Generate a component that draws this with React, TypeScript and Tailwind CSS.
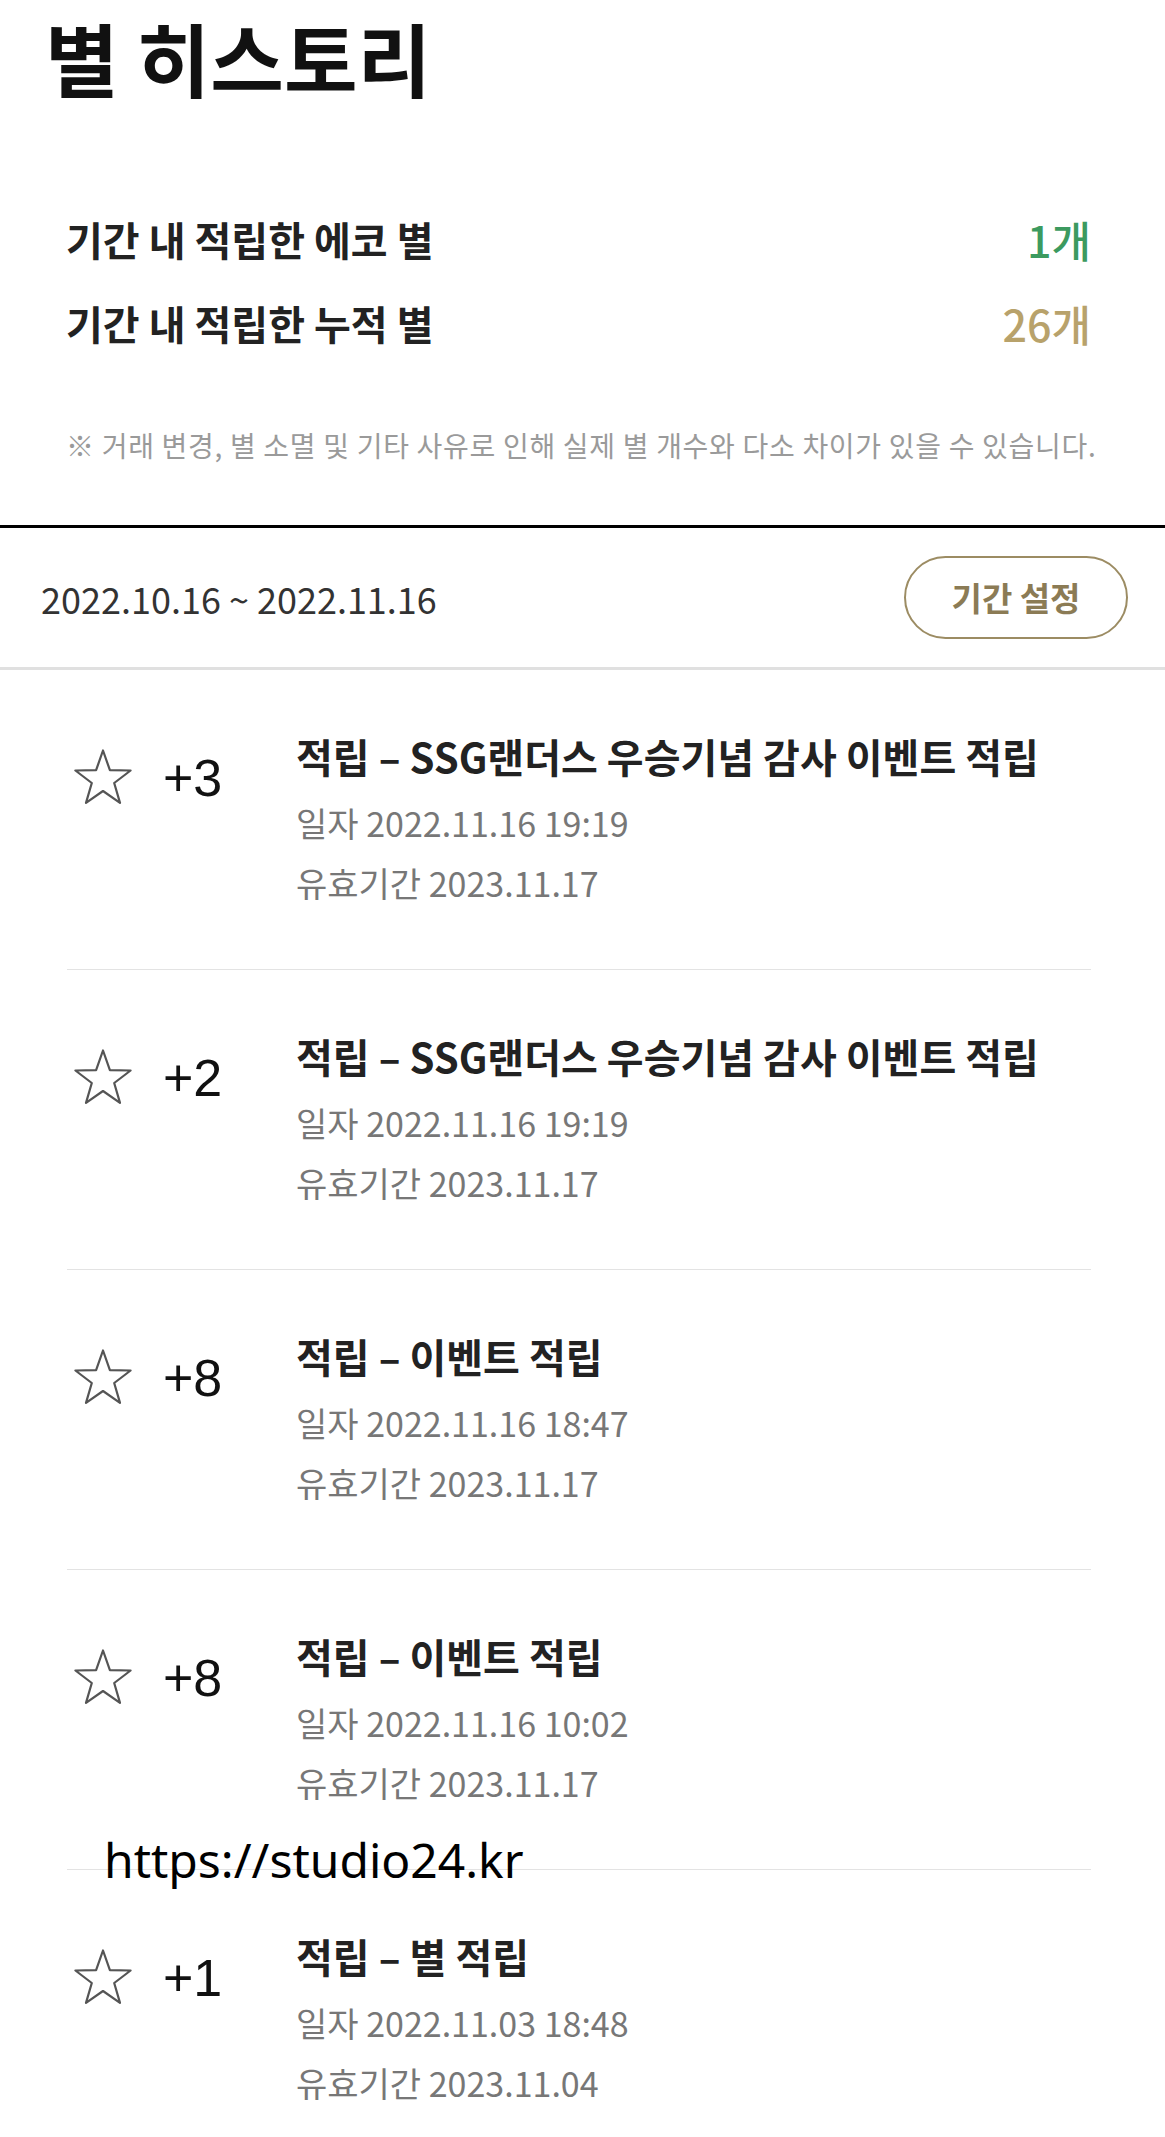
import React from "react";

const KR = { fontFamily: '"Noto Sans CJK KR", "Noto Sans", sans-serif' };

type Item = { amount: string; title: string; date: string; valid: string };

const items: Item[] = [
  { amount: "+3", title: "적립 – SSG랜더스 우승기념 감사 이벤트 적립", date: "일자 2022.11.16 19:19", valid: "유효기간 2023.11.17" },
  { amount: "+2", title: "적립 – SSG랜더스 우승기념 감사 이벤트 적립", date: "일자 2022.11.16 19:19", valid: "유효기간 2023.11.17" },
  { amount: "+8", title: "적립 – 이벤트 적립", date: "일자 2022.11.16 18:47", valid: "유효기간 2023.11.17" },
  { amount: "+8", title: "적립 – 이벤트 적립", date: "일자 2022.11.16 10:02", valid: "유효기간 2023.11.17" },
  { amount: "+1", title: "적립 – 별 적립", date: "일자 2022.11.03 18:48", valid: "유효기간 2023.11.04" },
];

function Star() {
  return (
    <svg width="60" height="58" viewBox="0 0 60 58" fill="none">
      <polygon
        points="30,1.5 36.9,21.2 57.6,21.5 41.2,34 47,53.9 30,42 13,53.9 18.8,34 2.4,21.5 23.1,21.2"
        stroke="#555"
        strokeWidth="2.2"
        strokeLinejoin="round"
      />
    </svg>
  );
}

export default function App() {
  return (
    <div className="relative w-[1165px] bg-white overflow-hidden" style={KR}>
      {/* Header */}
      <section className="pb-[60px] border-b-[3px] border-black">
        <h1 className="pl-[45px] text-[80px] leading-[112px] font-bold text-[#111]">별 히스토리</h1>
        <div className="mt-[85px] pl-[66px] pr-[74px]">
          <div className="flex items-center justify-between h-[84px]">
            <span className="text-[40px] leading-[84px] font-semibold text-[#222]">기간 내 적립한 에코 별</span>
            <span className="text-[43px] leading-[84px] font-medium text-[#3c9a5f]">1개</span>
          </div>
          <div className="flex items-center justify-between h-[84px]">
            <span className="text-[40px] leading-[84px] font-semibold text-[#222]">기간 내 적립한 누적 별</span>
            <span className="text-[43px] leading-[84px] font-medium text-[#b8a26b]">26개</span>
          </div>
        </div>
        <p className="mt-[60px] pl-[66px] text-[28px] leading-[40px] text-[#9a9a9a] tracking-[0.025em] whitespace-nowrap">
          ※ 거래 변경, 별 소멸 및 기타 사유로 인해 실제 별 개수와 다소 차이가 있을 수 있습니다.
        </p>
      </section>

      {/* Date bar */}
      <section className="flex items-center justify-between h-[142px] pl-[41px] pr-[37px] border-b-[3px] border-[#e0e0e0]">
        <span className="text-[36px] text-[#333]">2022.10.16 ~ 2022.11.16</span>
        <button className="w-[224px] h-[83px] rounded-full border-[2.5px] border-[#9c8c63] text-[33px] font-bold text-[#8b7b55] flex items-center justify-center">
          기간 설정
        </button>
      </section>

      {/* List */}
      <section className="pl-[67px] pr-[74px]">
        {items.map((it, i) => (
          <div key={i} className="flex h-[300px] pt-[57px] border-b border-[#e3e3e3]">
            <div className="flex items-center w-[229px] h-[58px] mt-[22px]">
              <div className="ml-[6px]"><Star /></div>
              <span
                className="ml-[30px] text-[52px] leading-[58px] text-[#111]"
                style={{ fontFamily: '"Liberation Sans", Arial, sans-serif' }}
              >
                {it.amount}
              </span>
            </div>
            <div className="flex flex-col">
              <span className="text-[40px] leading-[58px] font-semibold text-[#222] whitespace-nowrap">{it.title}</span>
              <span className="mt-[8px] text-[34px] leading-[60px] text-[#777]">{it.date}</span>
              <span className="text-[34px] leading-[60px] text-[#777]">{it.valid}</span>
            </div>
          </div>
        ))}
      </section>

      {/* Watermark */}
      <div
        className="absolute left-[104px] top-[1827px] text-[48px] leading-[66px] text-black"
        style={{ fontFamily: '"Noto Sans", "Open Sans", sans-serif' }}
      >
        https://studio24.kr
      </div>
    </div>
  );
}
